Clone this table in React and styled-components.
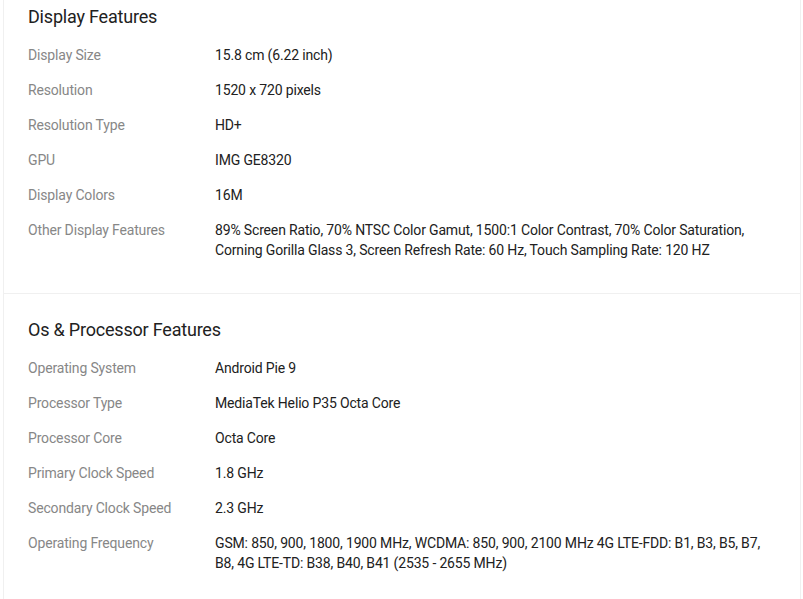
import React from 'react'
import styled, { createGlobalStyle } from 'styled-components'

const GlobalStyle = createGlobalStyle`
  body {
    margin: 0;
    background: #fff;
    font-family: Roboto, "Liberation Sans", Arial, sans-serif;
    letter-spacing: -0.16px;
    overflow: hidden;
  }
`

const Page = styled.div`
  position: relative;
  padding: 0 2px 0 3px;
`

const TopShadow = styled.div`
  position: absolute;
  top: -30px;
  left: 70px;
  width: 150px;
  height: 30px;
  box-shadow: 0 2px 12px rgba(0, 0, 0, 0.08);
  border-radius: 40px;
`

const Card = styled.div`
  margin-top: -20px;
  border: 1px solid #f0f0f0;
  background: #fff;
`

const Section = styled.div`
  padding: 24px 24px 18px;
  & + & {
    border-top: 1px solid #f0f0f0;
  }
`

const Title = styled.div`
  font-size: 18px;
  line-height: 24px;
  color: #212121;
  letter-spacing: -0.2px;
  margin-bottom: 16px;
`

const Row = styled.div`
  display: flex;
  font-size: 14px;
  line-height: 20px;
  padding-bottom: 15px;
`

const Label = styled.div`
  flex: 0 0 25%;
  color: #878787;
  padding-right: 8px;
  box-sizing: border-box;
`

const Value = styled.div`
  flex: 1;
  color: #212121;
`

const sections = [
  {
    title: 'Display Features',
    rows: [
      ['Display Size', '15.8 cm (6.22 inch)'],
      ['Resolution', '1520 x 720 pixels'],
      ['Resolution Type', 'HD+'],
      ['GPU', 'IMG GE8320'],
      ['Display Colors', '16M'],
      ['Other Display Features', '89% Screen Ratio, 70% NTSC Color Gamut, 1500:1 Color Contrast, 70% Color Saturation, Corning Gorilla Glass 3, Screen Refresh Rate: 60 Hz, Touch Sampling Rate: 120 HZ'],
    ],
  },
  {
    title: 'Os & Processor Features',
    rows: [
      ['Operating System', 'Android Pie 9'],
      ['Processor Type', 'MediaTek Helio P35 Octa Core'],
      ['Processor Core', 'Octa Core'],
      ['Primary Clock Speed', '1.8 GHz'],
      ['Secondary Clock Speed', '2.3 GHz'],
      ['Operating Frequency', 'GSM: 850, 900, 1800, 1900 MHz, WCDMA: 850, 900, 2100 MHz 4G LTE-FDD: B1, B3, B5, B7, B8, 4G LTE-TD: B38, B40, B41 (2535 - 2655 MHz)'],
    ],
  },
]

const App = () => {
  return (
    <Page>
      <GlobalStyle />
      <TopShadow />
      <Card>
        {sections.map((section) => (
          <Section key={section.title}>
            <Title>{section.title}</Title>
            {section.rows.map(([label, value]) => (
              <Row key={label}>
                <Label>{label}</Label>
                <Value>{value}</Value>
              </Row>
            ))}
          </Section>
        ))}
      </Card>
    </Page>
  )
}

export default App
